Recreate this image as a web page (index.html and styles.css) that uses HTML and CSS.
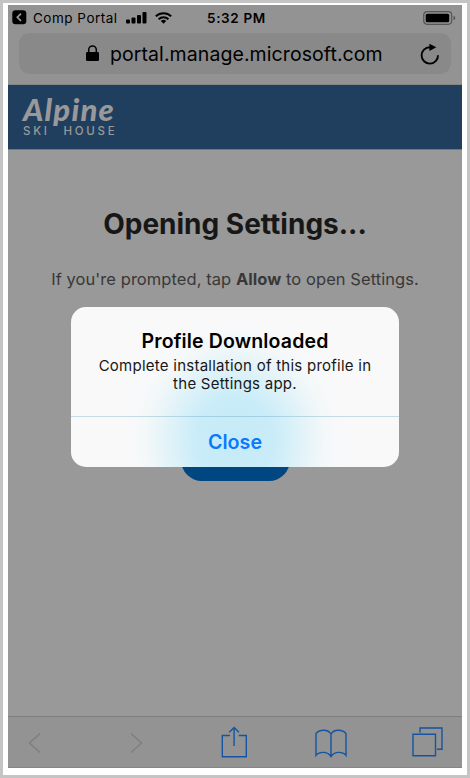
FILE: index.html
```html
<!DOCTYPE html>
<html lang="en">
<head>
<meta charset="utf-8">
<title>Opening Settings</title>
<link rel="stylesheet" href="styles.css">
</head>
<body>
<div class="frame">
<div class="phone">
  <div class="chrome">
    <div class="status">
      <svg class="back" width="15" height="15" viewBox="0 0 15 15"><rect x=".3" y=".3" width="14" height="14" rx="3.2"/><path d="M9 3.7 5.3 7.3 9 10.9" fill="none" stroke="#999" stroke-width="1.7"/></svg>
      <span class="carrier">Comp Portal</span>
      <svg class="signal" width="21" height="12" viewBox="0 0 21 12"><rect y="7.5" width="4" height="4" rx="1"/><rect x="5.5" y="5.5" width="4" height="6" rx="1"/><rect x="11" y="3" width="4" height="8.500" rx="1"/><rect x="16.500" y="0" width="4" height="11.500" rx="1"/></svg>
      <svg class="wifi" width="17" height="12" viewBox="0 0 17 12"><g fill="none" stroke="#000" stroke-width="2"><path d="M.8 4.300a11 11 0 0 1 15.400 0"/><path d="M3.600 7.200a7 7 0 0 1 9.800 0"/></g><path d="M5.800 9a4 4 0 0 1 5.400 0L8.500 11.700z"/></svg>
      <span class="time">5:32 PM</span>
      <svg class="battery" width="33" height="14" viewBox="0 0 33 14"><rect x=".7" y=".7" width="28" height="12.600" rx="3.500" fill="none" stroke="#555" stroke-width="1.200"/><rect x="2.700" y="2.700" width="23.500" height="8.600" rx="1.500"/><path d="M30.500 5q1.800 0 1.800 2t-1.800 2z" fill="#555"/></svg>
    </div>
    <div class="address">
      <svg class="lock" width="13" height="17" viewBox="0 0 13 17"><rect y="7" width="13" height="9" rx="1.300"/><path d="M2.700 7.500V4.700a3.800 3.800 0 0 1 7.600 0v2.800" fill="none" stroke="#000" stroke-width="1.500"/></svg>
      <span class="url">portal.manage.microsoft.com</span>
      <svg class="reload" width="20" height="22" viewBox="0 0 20 22"><path d="M18 12.200A8.200 8.200 0 1 1 9.800 4.200h2.500" fill="none" stroke="#000" stroke-width="1.900"/><path d="M9.400.7 16.300 4.300 9.400 8z"/></svg>
    </div>
  </div>
  <header class="brand">
    <div class="script">Alpine</div>
    <div class="sub"><span>SKI</span><span>HOUSE</span></div>
  </header>
  <main class="content">
    <h1>Opening Settings...</h1>
    <p>If you're prompted, tap <b>Allow</b> to open Settings.</p>
    <div class="action"></div>
  </main>
  <nav class="toolbar">
    <svg width="13" height="22" viewBox="0 0 13 22" class="muted back-nav"><path d="M12 1.500 1.500 11 12 20.500"/></svg>
    <svg width="13" height="22" viewBox="0 0 13 22" class="muted forward-nav"><path d="M1 1.500 11.500 11 1 20.500"/></svg>
    <svg class="share" width="26" height="32" viewBox="0 0 26 32"><path d="M9 9.500H1.300v21.200h24V9.500h-7.600M13.100 20V1.500M8.300 6.200l4.800-4.700 4.800 4.700"/></svg>
    <svg class="book" width="32" height="29" viewBox="0 0 32 29"><path d="M16 5.200Q14 1.200 8.700 1.200T1 4.600v21.800q2.400-3 7.400-3T16 27.600q2.600-4.200 7.600-4.200t7.400 3V4.600q-2.400-3.400-7.700-3.400T16 5.200zV27.600"/></svg>
    <svg class="tabs" width="31" height="30" viewBox="0 0 31 30"><path d="M1 7.300h22.500v21.500H1zM8 5.700V1h22v21.300h-5"/></svg>
  </nav>
  <section class="dialog">
    <div class="message">
      <h2>Profile Downloaded</h2>
      <p>Complete installation of this profile in<br>the Settings app.</p>
    </div>
    <div class="close">Close</div>
  </section>
</div>
</div>
</body>
</html>
```
FILE: styles.css
```css
* { box-sizing: border-box; }
body { margin: 0; font-family: Inter, "Liberation Sans", sans-serif; color: #000; background: #c4c4c4; }
svg { flex: none; display: block; }
.frame { width: 470px; height: 778px; border: 3px solid #c4c4c4; background: #fff; padding: 2px 5px 7px; }
.phone { position: relative; width: 454px; height: 763px; background: #999; display: flex; flex-direction: column; overflow: hidden; white-space: nowrap; }
.chrome { height: 80px; background: #939393; border-bottom: 1px solid #858585; flex: none; }
.status { height: 28px; display: flex; align-items: center; padding: 0 6px 3px 4px; }
.carrier { font-size: 13.5px; letter-spacing: .5px; margin-left: 6px; width: 88px; }
.signal { margin-left: 5px; }
.wifi { margin-left: 8px; }
.time { font-size: 13.5px; font-weight: 600; letter-spacing: .65px; margin-left: 35px; }
.battery { margin-left: auto; }
.address { height: 41px; margin: 0 11px; border-radius: 11px; background: #898989; display: flex; align-items: center; padding: 0 11px 0 67px; }
.url { font-size: 19.5px; letter-spacing: .08px; margin-left: 11px; }
.reload { margin-left: auto; }
.brand { height: 65px; flex: none; background: #203f5f; color: #999; padding: 12px 0 0 15px; border-bottom: 1px solid #777; }
.script { font: italic 900 31px/24px Lato, sans-serif; letter-spacing: 1.2px; height: 30px; }
.sub { font: 500 11.5px/9px Inter, sans-serif; letter-spacing: 2.7px; display: flex; gap: 14px; }
.content { flex: 1; display: flex; flex-direction: column; align-items: center; }
h1 { margin: 55px 0 0; font-size: 28px; line-height: 38px; font-weight: 700; color: #171717; }
.content p { margin: 25px 0 0; font-size: 16.5px; letter-spacing: .06px; line-height: 22px; color: #383838; }
.action { width: 109px; height: 42px; border-radius: 21px; background: #004680; margin-top: 149px; }
.toolbar { height: 52px; flex: none; background: #939393; border-top: 1px solid #7d7d7d; border-bottom: 1px solid #858585; display: flex; align-items: center; padding: 0 0 0 20px; fill: none; stroke: #1554a0; stroke-width: 1.4; }
.muted { stroke: #7e7e7e; margin-top: 2px; }
.forward-nav { margin-left: 89px; }
.share { margin-left: 78px; }
.book { margin-left: 68px; margin-top: 2px; }
.tabs { margin-left: 65px; }
.dialog { position: absolute; left: 63px; top: 302px; width: 328px; height: 160px; border-radius: 15px; overflow: hidden; text-align: center; background: radial-gradient(ellipse 110px 120px at 164px 133px, #c5eaf7 0%, #c9ecf8 35%, #e2f3f8 62%, #f4f8f9 82%, #f9f9fa 100%); }
.message { height: 110px; padding-top: 22px; border-bottom: 1px solid rgba(80, 150, 180, .3); }
h2 { margin: 0; font-size: 19.5px; letter-spacing: .15px; line-height: 25px; font-weight: 600; }
.dialog p { margin: 3px 0 0; font-size: 15px; letter-spacing: .25px; line-height: 18px; color: #171717; }
.close { height: 50px; line-height: 51px; color: #087aff; font-size: 19.7px; font-weight: 600; }
```
